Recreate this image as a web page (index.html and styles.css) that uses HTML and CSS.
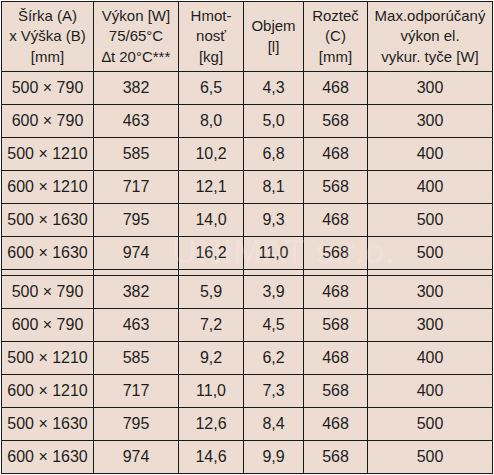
FILE: index.html
```html
<!DOCTYPE html>
<html>
<head>
<meta charset="utf-8">
<link rel="stylesheet" href="styles.css">
</head>
<body>
<div class="wrap">
<table class="spec">
<colgroup>
<col class="c1"><col class="c2"><col class="c3"><col class="c4"><col class="c5"><col class="c6">
</colgroup>
<thead>
<tr class="head">
<th>Šírka (A)<br>x Výška (B)<br>[mm]</th>
<th>Výkon [W]<br>75/65°C<br>∆t 20°C***</th>
<th>Hmot-<br>nosť<br>[kg]</th>
<th>Objem<br>[l]</th>
<th>Rozteč<br>(C)<br>[mm]</th>
<th>Max.odporúčaný<br>výkon el.<br>vykur. tyče [W]</th>
</tr>
</thead>
<tbody>
<tr><td>500 × 790</td><td>382</td><td>6,5</td><td>4,3</td><td>468</td><td>300</td></tr>
<tr><td>600 × 790</td><td>463</td><td>8,0</td><td>5,0</td><td>568</td><td>300</td></tr>
<tr><td>500 × 1210</td><td>585</td><td>10,2</td><td>6,8</td><td>468</td><td>400</td></tr>
<tr><td>600 × 1210</td><td>717</td><td>12,1</td><td>8,1</td><td>568</td><td>400</td></tr>
<tr><td>500 × 1630</td><td>795</td><td>14,0</td><td>9,3</td><td>468</td><td>500</td></tr>
<tr><td>600 × 1630</td><td>974</td><td>16,2</td><td>11,0</td><td>568</td><td>500</td></tr>
<tr class="gap"><td></td><td></td><td></td><td></td><td></td><td></td></tr>
<tr><td>500 × 790</td><td>382</td><td>5,9</td><td>3,9</td><td>468</td><td>300</td></tr>
<tr><td>600 × 790</td><td>463</td><td>7,2</td><td>4,5</td><td>568</td><td>300</td></tr>
<tr><td>500 × 1210</td><td>585</td><td>9,2</td><td>6,2</td><td>468</td><td>400</td></tr>
<tr><td>600 × 1210</td><td>717</td><td>11,0</td><td>7,3</td><td>568</td><td>400</td></tr>
<tr><td>500 × 1630</td><td>795</td><td>12,6</td><td>8,4</td><td>468</td><td>500</td></tr>
<tr><td>600 × 1630</td><td>974</td><td>14,6</td><td>9,9</td><td>568</td><td>500</td></tr>
</tbody>
</table>
<div class="watermark">UNIMAT s.r.o.</div>
</div>
</body>
</html>
```
FILE: styles.css
```css
html, body {
  margin: 0;
  padding: 0;
  background: #ffffff;
}
.wrap {
  position: relative;
  padding: 1px 0 0 1px;
  width: 492px;
}
.spec {
  border-collapse: collapse;
  table-layout: fixed;
  width: 491px;
  background: #eddcd2;
  font-family: "Liberation Sans", Arial, sans-serif;
  color: #1e1e1e;
}
.c1 { width: 92px; }
.c2 { width: 85px; }
.c3 { width: 65px; }
.c4 { width: 60px; }
.c5 { width: 64px; }
.c6 { width: 125px; }
.spec th, .spec td {
  border: 1px solid #1a1a1a;
  padding: 0;
  text-align: center;
  vertical-align: middle;
  white-space: nowrap;
  overflow: hidden;
}
.spec th {
  font-weight: normal;
  font-size: 15px;
  line-height: 20.5px;
}
.head { height: 70px; }
.spec td {
  font-size: 16px;
  height: 32px;
}
.spec tr.gap td {
  height: 5px;
  font-size: 0;
  line-height: 0;
}
.watermark {
  position: absolute;
  left: 172px;
  top: 232px;
  font-family: "Liberation Sans", Arial, sans-serif;
  font-size: 34px;
  letter-spacing: 1px;
  color: rgba(255, 255, 255, 0.18);
  pointer-events: none;
}
```
